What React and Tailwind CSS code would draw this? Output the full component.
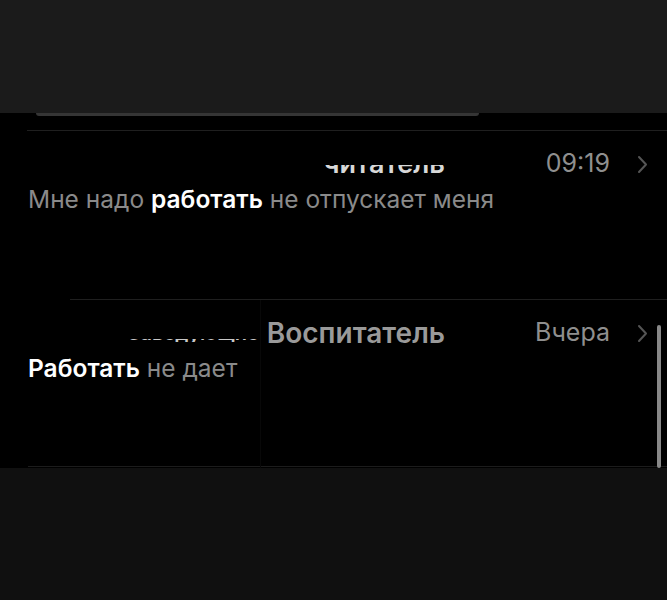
import React from 'react';

const font = { fontFamily: 'Inter, "Noto Sans", sans-serif' };

function Chevron() {
  return (
    <svg width="11" height="19" viewBox="0 0 11 19" fill="none" className="shrink-0">
      <path d="M2 2 L9 9.5 L2 17" stroke="#555555" strokeWidth="2" strokeLinecap="round" strokeLinejoin="round" />
    </svg>
  );
}

function Row({ title, time, bold, lead, rest, height }) {
  return (
    <div className={`${height} flex flex-col pl-[28px] pr-[19px]`}>
      <div className="flex items-center h-[44px] mt-[11px]">
        <div className="flex-1 flex justify-end">{title}</div>
        <span className="w-[165px] text-right text-[25px] text-[#8f8f8f]">{time}</span>
        <span className="w-[27px]" />
        <Chevron />
      </div>
      <div className="text-[24.5px] leading-[30px] mt-[-2px] text-[#8a8a8a] whitespace-nowrap">
        {lead}<span className="text-white font-semibold">{bold}</span> {rest}
      </div>
    </div>
  );
}

export default function App() {
  return (
    <div className="w-[667px] h-[600px] flex flex-col bg-black relative overflow-hidden" style={font}>
      <div className="h-[113px] bg-[#1b1b1b]" />

      <div className="h-[355px] bg-black flex flex-col">
        <div className="ml-[36px] w-[443px] h-[3px] rounded-b-[3px] bg-[#353535]" />
        <div className="mt-[14px] ml-[27px] h-px bg-[#1f1f1f]" />
        <Row
          height="h-[168px]"
          time="09:19"
          lead="Мне надо "
          bold="работать"
          rest="не отпускает меня"
          title={
            <div className="relative">
              <span className="block text-[27px] leading-[34px] font-semibold text-[#d8d8d8]">читатель</span>
              <div className="absolute inset-x-[-4px] top-0 h-[18px] bg-black" />
            </div>
          }
        />
        <div className="ml-[70px] h-px bg-[#1f1f1f]" />
        <Row
          height="h-[166px]"
          time="Вчера"
          bold="Работать"
          rest="не дает"
          title={
            <div className="flex items-center">
              <div className="relative mr-[8px]">
                <span className="block text-[20px] leading-[26px] font-semibold text-[#c8c8c8]">Заведующие</span>
                <div className="absolute inset-x-[-2px] top-0 h-[19px] bg-black" />
                <div className="absolute inset-x-[-2px] bottom-0 h-[4px] bg-black" />
              </div>
              <span className="text-[28px] leading-[34px] font-semibold text-[#9a9a9a]">Воспитатель</span>
            </div>
          }
        />
        <div className="ml-[28px] h-px bg-[#1c1c1c]" />
      </div>

      <div className="flex-1 bg-[#101010]" />

      <div className="absolute left-[260px] top-[300px] w-px h-[168px] bg-[#080808]" />
      <div className="absolute left-[657px] top-[325px] w-[4px] h-[143px] rounded-full bg-[#888]" />
    </div>
  );
}
